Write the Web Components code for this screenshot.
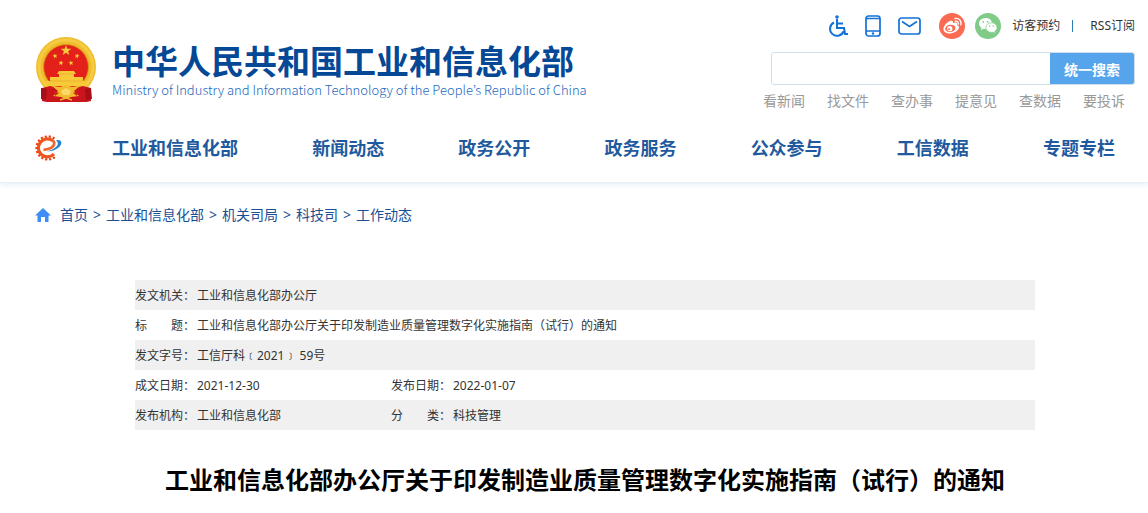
<!DOCTYPE html>
<html lang="zh-CN">
<head>
<meta charset="utf-8">
<title>工业和信息化部办公厅关于印发制造业质量管理数字化实施指南（试行）的通知</title>
<style>
  body {
    margin: 0;
    background: #fff;
    color: #333;
    font: 12px/20px "Noto Sans", "Noto Sans CJK SC", sans-serif;
  }
</style>
</head>
<body>
<site-header>
  <site-brand slot="brand"></site-brand>
  <top-tools slot="tools"></top-tools>
  <site-search slot="tools"></site-search>
  <main-nav slot="nav"></main-nav>
</site-header>
<main>
  <bread-crumb></bread-crumb>
  <doc-article>
    <doc-info slot="info"></doc-info>
    工业和信息化部办公厅关于印发制造业质量管理数字化实施指南（试行）的通知
  </doc-article>
</main>

<script>
class BaseElement extends HTMLElement {
  constructor() {
    super()
    this.attachShadow({ mode: 'open' })
  }

  connectedCallback() {
    this.shadowRoot.innerHTML = this.render()
  }
}

class SiteHeader extends BaseElement {
  render() {
    return `
      <style>
        :host {
          display: block;
          border-bottom: 1px solid #e9f1f7;
          box-shadow: 0 2px 5px #e6f0f7;
        }
        .top {
          display: flex;
          justify-content: space-between;
          align-items: flex-start;
          padding: 12px 13px 0 35px;
        }
        .tools {
          display: flex;
          flex-direction: column;
          align-items: flex-end;
        }
      </style>
      <header>
        <div class="top">
          <slot name="brand"></slot>
          <div class="tools"><slot name="tools"></slot></div>
        </div>
        <slot name="nav"></slot>
      </header>
    `
  }
}

class SiteBrand extends BaseElement {
  render() {
    const star = '0,-10 2.4,-3.2 9.5,-3.1 3.8,1.2 5.9,8.1 0,4 -5.9,8.1 -3.8,1.2 -9.5,-3.1 -2.4,-3.2'
    return `
      <style>
        :host {
          display: block;
          padding-top: 24px;
        }
        a {
          display: flex;
          gap: 15px;
          text-decoration: none;
          white-space: nowrap;
        }
        svg { width: 62px; height: 66px; flex: none; }
        .name { padding-top: 8px; }
        strong {
          display: block;
          font-family: "Liberation Sans", "Noto Sans CJK SC", sans-serif;
          font-size: 33px;
          line-height: 38px;
          font-weight: 700;
          color: #044896;
        }
        small {
          display: block;
          font-family: "Noto Sans CJK KR", sans-serif;
          font-size: 13px;
          line-height: 16px;
          font-weight: 300;
          color: #1c69c0;
        }
      </style>
      <a href="#">
        <svg viewBox="7 6 62 66" aria-hidden="true">
          <circle cx="38" cy="37" r="30" fill="#efbd2c"/>
          <circle cx="38" cy="37" r="27" fill="none" stroke="#f5cb43" stroke-width="3"/>
          <circle cx="38" cy="37" r="22.5" fill="#e4201b" stroke="#d89b18" stroke-width="1"/>
          <g fill="#f8ca38">
            <polygon points="${star}" transform="translate(38 20.500) scale(.56)"/>
            <polygon points="${star}" transform="translate(27 26) rotate(-15) scale(.27)"/>
            <polygon points="${star}" transform="translate(49 26) rotate(15) scale(.27)"/>
            <polygon points="${star}" transform="translate(33 33) rotate(10) scale(.27)"/>
            <polygon points="${star}" transform="translate(43 33) rotate(-10) scale(.27)"/>
            <path d="M31 41h15l2 3h-2v3h9v4h4c-1 3-2 4-4 5H22c-3-1-4-3-4-5h4v-4h9v-3h-2z"/>
          </g>
          <path d="M31 44h15M22 51h33" stroke="#e0a02a" stroke-width=".6"/>
          <path d="M14 58l8-2 8 2h17l8-2 8 2v13l-9 2-11-1H32l-9 1-9-2z" fill="#c9151b"/>
          <path d="M13 58l6 1-1 11-5-1zM63 58l-6 1 1 11 6-1z" fill="#a70e17"/>
          <path d="M24 56l8 1 6-2 6 2 8-1-6 5 5 5-8 1-5 2-5-2-8-1 5-5z" fill="#f2bd2d"/>
          <path d="M33 61l5-3 5 3-2 4h-6z" fill="#f9d96a"/>
          <path d="M26 61l5 2-4 3M50 61l-5 2 4 3" fill="#d3231a"/>
          <path d="M32 70l6-2 6 2" fill="none" stroke="#edb52d" stroke-width="1.4"/>
        </svg>
        <span class="name">
          <strong>中华人民共和国工业和信息化部</strong>
          <small lang="en">Ministry of Industry and Information Technology of the People’s Republic of China</small>
        </span>
      </a>
    `
  }
}

class TopTools extends BaseElement {
  render() {
    return `
      <style>
        :host {
          display: flex;
          align-items: center;
          height: 28px;
          white-space: nowrap;
        }
        nav { display: flex; align-items: center; }
        a { color: #333; text-decoration: none; }
        svg { display: block; fill: none; stroke: #1272d8; stroke-width: 2; }
        .icons { display: flex; align-items: center; gap: 17px; margin-right: 18px; }
        .social { display: flex; gap: 10px; margin-right: 11px; }
        .social svg { stroke: none; }
        .bar { width: 1px; height: 12px; margin: 0 17px 0 12px; background: #2a7db5; }
      </style>
      <nav>
        <span class="icons">
          <a href="#" aria-label="无障碍"><svg width="20" height="24" viewBox="0 0 20 24"><circle cx="9" cy="3" r="1.8" fill="#1272d8" stroke="none"/><path d="M9 5v9h7l1 6h3M9 9.500h6M6 8.500a7 7 0 1 0 9.500 9"/></svg></a>
          <a href="#" aria-label="手机版"><svg width="16" height="24" viewBox="0 0 16 24"><rect x="1" y="2" width="14" height="20" rx="2.5" stroke-width="1.7"/><path d="M1 4.500h14M1 17h14" stroke-width="1.4"/><circle cx="8" cy="19.500" r="1.2" fill="#1272d8" stroke="none"/></svg></a>
          <a href="#" aria-label="邮箱"><svg width="23" height="20" viewBox="0 0 23 20"><rect x="1" y="2" width="21" height="16" rx="2.5" stroke-width="1.7"/><path d="M4 5.500l7.500 5L19 5.500" stroke-width="1.7"/></svg></a>
        </span>
        <span class="social">
          <a href="#" aria-label="微博"><svg width="26" height="26" viewBox="0 0 26 26">
            <circle cx="13" cy="13" r="13" fill="#fa6b52"/>
            <path d="M11 8c2-.8 3.500 0 3 2 3-1.200 5-.3 4 2 2 .8 2.500 2 1.700 3.600-1.300 3-5 4.800-8.700 4.800-4 0-7-2-6.500-5C5 12.500 8 9 11 8z" fill="#fff"/>
            <ellipse cx="11.300" cy="15.400" rx="5.200" ry="3.600" fill="#fa6b52" transform="rotate(-8 11.300 15.400)"/>
            <circle cx="10.800" cy="15.700" r="2.600" fill="#fff"/><circle cx="10" cy="16.200" r="1" fill="#fa6b52"/>
            <path d="M16 5.500c4-.8 7 2.500 5.800 6.300M16.500 8.300c2-.3 3.200 1 2.700 2.800" fill="none" stroke="#fff" stroke-width="1.400" stroke-linecap="round"/>
          </svg></a>
          <a href="#" aria-label="微信"><svg width="26" height="26" viewBox="0 0 26 26">
            <circle cx="13" cy="13" r="13" fill="#7fcb87"/>
            <path d="M10.500 5C6.900 5 4 7.400 4 10.500c0 1.800 1 3.300 2.500 4.300L6 17l2.500-1.300c4.500 1 8.500-1.500 8.500-5.200S14 5 10.500 5z" fill="#fff"/>
            <path d="M16.500 9.800c-3.200 0-5.700 2.100-5.700 4.800s2.500 4.800 5.700 4.800l1.600-.2 2.300 1.200-.6-2c1.400-.9 2.200-2.200 2.200-3.800 0-2.700-2.400-4.800-5.500-4.800z" fill="#fff" stroke="#7fcb87" stroke-width=".7"/>
            <g fill="#7fcb87"><circle cx="8.300" cy="8.800" r=".9"/><circle cx="12.500" cy="8.800" r=".9"/><circle cx="14.700" cy="13" r=".8"/><circle cx="18.300" cy="13" r=".8"/></g>
          </svg></a>
        </span>
        <a href="#">访客预约</a>
        <span class="bar"></span>
        <a href="#">RSS订阅</a>
      </nav>
    `
  }
}

class SiteSearch extends BaseElement {
  render() {
    const links = ['看新闻', '找文件', '查办事', '提意见', '查数据', '要投诉']
    return `
      <style>
        :host { display: block; padding-top: 12px; }
        form {
          display: flex;
          width: 364px;
          height: 33px;
          margin-left: auto;
          box-sizing: border-box;
          border: 1px solid #cfdeeb;
          border-radius: 3px;
          overflow: hidden;
        }
        input {
          flex: 1;
          min-width: 0;
          padding: 0 8px;
          border: 0;
          outline: 0;
          font: inherit;
        }
        button {
          width: 84px;
          padding: 0;
          border: 0;
          background: #55a4ec;
          color: #fff;
          font: bold 14px/20px "Noto Sans CJK SC", sans-serif;
        }
        nav {
          display: flex;
          justify-content: flex-end;
          gap: 22px;
          padding: 6px 10px 0 0;
        }
        a { color: #999; font-size: 14px; text-decoration: none; }
      </style>
      <form>
        <input type="text" aria-label="搜索">
        <button type="button">统一搜索</button>
      </form>
      <nav>${links.map(text => `<a href="#">${text}</a>`).join('')}</nav>
    `
  }
}

class MainNav extends BaseElement {
  render() {
    const items = ['工业和信息化部', '新闻动态', '政务公开', '政务服务', '公众参与', '工信数据', '专题专栏']
    return `
      <style>
        :host { display: block; padding: 23px 33px 20px; }
        nav { display: flex; align-items: center; gap: 50px; }
        svg { display: block; width: 29px; height: 26px; }
        .items { flex: 1; display: flex; justify-content: space-between; }
        .items a {
          color: #1f5a9e;
          font-size: 18px;
          line-height: 28px;
          font-weight: bold;
          text-decoration: none;
          white-space: nowrap;
        }
      </style>
      <nav>
        <a href="#" aria-label="工信"><svg viewBox="0 0 29 26">
          <path d="M21.500 3.500A11.500 11.500 0 1 0 22 22" fill="none" stroke="#e8441c" stroke-width="2.200" stroke-dasharray="2.200 1.800"/>
          <path d="M19.500 5.500A9 9 0 1 0 21 19" fill="none" stroke="#ee541c" stroke-width="3.200"/>
          <path d="M19 5c4.500 2.500 2.500 9-8.500 9.800" fill="none" stroke="#f0682a" stroke-width="2.800"/>
          <path d="M23 5.300c3-.8 5.800.2 5.300 3.200-.8 4.300-7.800 8-14.300 7.800 5.500-1.200 10.300-4.300 10.800-7.300.2-1.500-.4-2.500-1.800-3.700z" fill="#2483cf"/>
        </svg></a>
        <div class="items">${items.map(text => `<a href="#">${text}</a>`).join('')}</div>
      </nav>
    `
  }
}

class BreadCrumb extends BaseElement {
  render() {
    const path = ['首页', '工业和信息化部', '机关司局', '科技司', '工作动态']
    return `
      <style>
        :host { display: block; padding: 22px 35px 0; }
        nav {
          display: flex;
          align-items: center;
          gap: 5px;
          color: #1b4f93;
          font-size: 14px;
        }
        a { color: inherit; text-decoration: none; }
        svg { display: block; margin-right: 4px; }
      </style>
      <nav>
        <svg width="16" height="14" viewBox="0 0 16 14" fill="#3f8df5" aria-hidden="true"><path d="M8 0l8 7.500h-2.500V14H10V9H6v5H2.500V7.500H0z"/></svg>
        ${path.map(text => `<a href="#">${text}</a>`).join('<span>&gt;</span>')}
      </nav>
    `
  }
}

class DocInfo extends BaseElement {
  render() {
    const rows = [
      ['发文机关：', '工业和信息化部办公厅'],
      ['标　　题：', '工业和信息化部办公厅关于印发制造业质量管理数字化实施指南（试行）的通知'],
      ['发文字号：', '工信厅科﹝2021﹞ 59号'],
      ['成文日期：', '2021-12-30', '发布日期：', '2022-01-07'],
      ['发布机构：', '工业和信息化部', '分　　类：', '科技管理']
    ]
    return `
      <style>
        :host { display: block; }
        table { width: 100%; border-collapse: collapse; table-layout: fixed; }
        .label { width: 62px; }
        .value { width: 194px; }
        tr:nth-child(odd) { background: #f0f0f0; }
        th, td {
          height: 28px;
          padding: 2px 0 0;
          text-align: left;
          font-weight: normal;
          white-space: nowrap;
        }
      </style>
      <table>
        <colgroup><col class="label"><col class="value"><col class="label"><col></colgroup>
        <tbody>${rows.map(row => this.renderRow(row)).join('')}</tbody>
      </table>
    `
  }

  renderRow([label, value, label2, value2]) {
    if (!label2) return `<tr><th scope="row">${label}</th><td colspan="3">${value}</td></tr>`
    return `<tr><th scope="row">${label}</th><td>${value}</td><th scope="row">${label2}</th><td>${value2}</td></tr>`
  }
}

class DocArticle extends BaseElement {
  render() {
    return `
      <style>
        :host { display: block; padding: 55px 113px 15px 135px; }
        h1 {
          margin: 32px 0 0;
          color: #000;
          font-size: 24px;
          line-height: 36px;
          font-weight: bold;
          text-align: center;
        }
      </style>
      <article>
        <slot name="info"></slot>
        <h1><slot></slot></h1>
      </article>
    `
  }
}

customElements.define('site-header', SiteHeader)
customElements.define('site-brand', SiteBrand)
customElements.define('top-tools', TopTools)
customElements.define('site-search', SiteSearch)
customElements.define('main-nav', MainNav)
customElements.define('bread-crumb', BreadCrumb)
customElements.define('doc-info', DocInfo)
customElements.define('doc-article', DocArticle)
</script>
</body>
</html>
